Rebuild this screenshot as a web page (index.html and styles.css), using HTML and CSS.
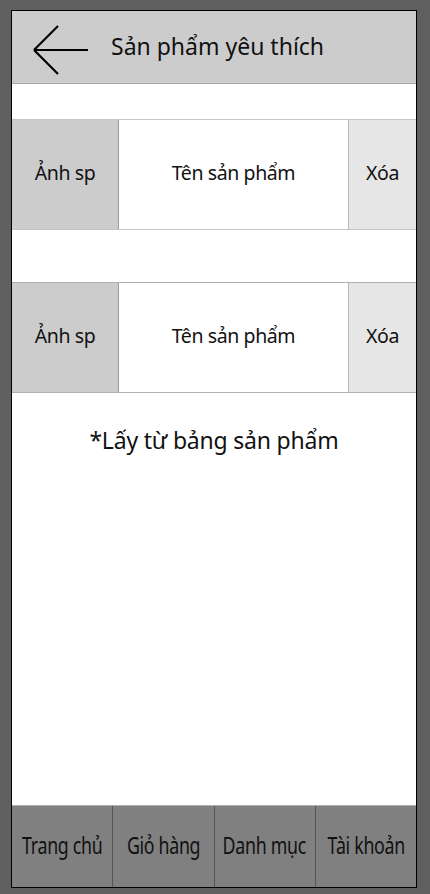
FILE: index.html
```html
<!DOCTYPE html>
<html lang="vi">
<head>
<meta charset="utf-8">
<title>Sản phẩm yêu thích</title>
<link rel="stylesheet" href="styles.css">
</head>
<body>
<div class="frame">
  <header class="header">
    <svg class="back" width="58" height="48" viewBox="0 0 58 48">
      <path d="M57 25 H3 M3 25 L27 1 M3 25 L27 49" fill="none" stroke="#000" stroke-width="2.2"/>
    </svg>
    <h1 class="title">Sản phẩm yêu thích</h1>
  </header>
  <main class="content">
    <div class="row">
      <div class="cell img">Ảnh sp</div>
      <div class="cell name">Tên sản phẩm</div>
      <div class="cell del">Xóa</div>
    </div>
    <div class="row row2">
      <div class="cell img">Ảnh sp</div>
      <div class="cell name">Tên sản phẩm</div>
      <div class="cell del">Xóa</div>
    </div>
    <p class="note">*Lấy từ bảng sản phẩm</p>
  </main>
  <nav class="nav">
    <div class="tab"><span class="label">Trang chủ</span></div>
    <div class="tab"><span class="label">Giỏ hàng</span></div>
    <div class="tab"><span class="label">Danh mục</span></div>
    <div class="tab"><span class="label">Tài khoản</span></div>
  </nav>
</div>
</body>
</html>
```
FILE: styles.css
```css
html, body {
  margin: 0;
  padding: 0;
  background: #5f5f5f;
  height: 100%;
}
body {
  font-family: "Noto Sans", "Open Sans", sans-serif;
  color: #111;
  padding: 10px 13px 6px 11px;
  box-sizing: border-box;
}
.frame {
  width: 406px;
  height: 878px;
  border: 1px solid #000;
  box-sizing: border-box;
  background: #fff;
  display: flex;
  flex-direction: column;
}
.header {
  height: 73px;
  background: #cccccc;
  border-bottom: 1px solid #a8a8a8;
  box-sizing: border-box;
  display: flex;
  align-items: center;
  padding-left: 19px;
}
.back {
  display: block;
  margin-top: 4px;
  overflow: visible;
}
.title {
  margin: 0 0 2px 22px;
  font-weight: 400;
  font-size: 23px;
  letter-spacing: 0;
}
.content {
  flex: 1;
  display: flex;
  flex-direction: column;
  padding-top: 35px;
}
.row {
  height: 111px;
  display: flex;
  border-top: 1px solid #c4c4c4;
  border-bottom: 1px solid #c4c4c4;
  box-sizing: border-box;
  font-size: 19.5px;
}
.row2 {
  margin-top: 52px;
  border-color: #b0b0b0;
}
.cell {
  display: flex;
  align-items: center;
  justify-content: center;
  letter-spacing: -0.4px;
  padding-bottom: 5px;
}
.img {
  width: 106px;
  background: #cccccc;
  border-right: 1px solid #9a9a9a;
}
.name {
  flex: 1;
  background: #fff;
}
.del {
  width: 67px;
  background: #e6e6e6;
  border-left: 1px solid #b8b8b8;
}
.note {
  margin: 31px 0 0;
  text-align: center;
  font-size: 23px;
  letter-spacing: -0.2px;
}
.nav {
  height: 82px;
  display: flex;
  background: #808080;
  border-top: 1px solid #b0b0b0;
  box-sizing: border-box;
}
.tab {
  flex: 1 1 0;
  min-width: 0;
  display: flex;
  align-items: center;
  justify-content: center;
  border-left: 1px solid #555;
  padding-bottom: 4px;
}
.tab:first-child {
  border-left: none;
}
.label {
  flex: none;
  display: inline-block;
  font-size: 24px;
  letter-spacing: -0.4px;
  white-space: nowrap;
  transform: scaleX(0.74);
}
```
